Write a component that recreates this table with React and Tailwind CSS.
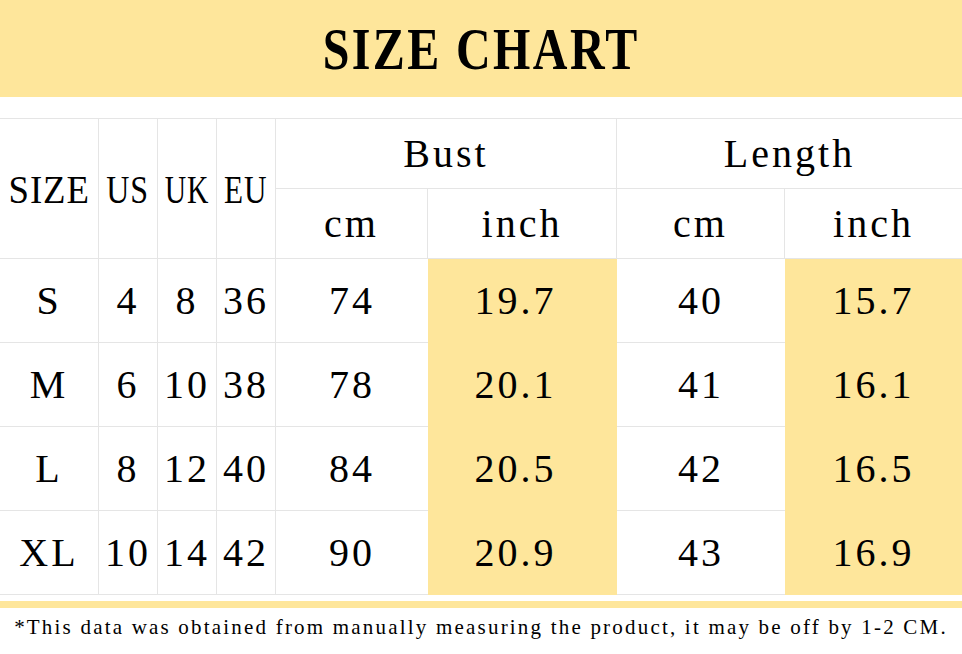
import React from 'react';

const rows = [
  { size: 'S', us: '4', uk: '8', eu: '36', bustCm: '74', bustIn: '19.7', lenCm: '40', lenIn: '15.7' },
  { size: 'M', us: '6', uk: '10', eu: '38', bustCm: '78', bustIn: '20.1', lenCm: '41', lenIn: '16.1' },
  { size: 'L', us: '8', uk: '12', eu: '40', bustCm: '84', bustIn: '20.5', lenCm: '42', lenIn: '16.5' },
  { size: 'XL', us: '10', uk: '14', eu: '42', bustCm: '90', bustIn: '20.9', lenCm: '43', lenIn: '16.9' },
];

const cell = 'flex items-center justify-center border-b border-r border-[#e5e5e5]';

const App = () => {
  return (
    <div className="w-[962px] h-[654px] bg-white text-black font-['Liberation_Serif',serif] overflow-hidden">
      <div className="h-[97px] bg-[#fee69b] flex items-center justify-center">
        <h1 className="text-[60px] leading-none font-bold scale-x-[0.8] tracking-[3px]">SIZE CHART</h1>
      </div>

      <div className="mt-[21px] grid grid-cols-[99px_59px_59px_59px_152px_189px_168px_177px] grid-rows-[70px_70px_84px_84px_84px_84px] border-t border-[#e5e5e5] text-[40px] leading-none tracking-[3px]">
        <div className={`${cell} row-span-2 tracking-[1px] pt-[3px]`}>
          <span className="inline-block scale-x-[0.92]">SIZE</span>
        </div>
        <div className={`${cell} row-span-2 tracking-[1px] pt-[3px]`}>
          <span className="inline-block scale-x-[0.8]">US</span>
        </div>
        <div className={`${cell} row-span-2 tracking-[1px] pt-[3px]`}>
          <span className="inline-block scale-x-[0.74]">UK</span>
        </div>
        <div className={`${cell} row-span-2 tracking-[1px] pt-[3px]`}>
          <span className="inline-block scale-x-[0.78]">EU</span>
        </div>
        <div className={`${cell} col-span-2`}>Bust</div>
        <div className={`${cell} col-span-2 border-r-0`}>Length</div>
        <div className={cell}>cm</div>
        <div className={cell}>inch</div>
        <div className={cell}>cm</div>
        <div className={`${cell} border-r-0`}>inch</div>

        {rows.map((r, i) => (
          <React.Fragment key={r.size}>
            <div className={`${cell} col-start-1`} style={{ gridRowStart: i + 3 }}>{r.size}</div>
            <div className={cell} style={{ gridRowStart: i + 3 }}>{r.us}</div>
            <div className={cell} style={{ gridRowStart: i + 3 }}>{r.uk}</div>
            <div className={cell} style={{ gridRowStart: i + 3 }}>{r.eu}</div>
            <div className={`${cell} border-r-0`} style={{ gridRowStart: i + 3 }}>{r.bustCm}</div>
            <div className={`${cell} col-start-7 border-r-0`} style={{ gridRowStart: i + 3 }}>{r.lenCm}</div>
          </React.Fragment>
        ))}

        <div className="col-start-6 row-start-3 row-span-4 bg-[#fee69b] grid grid-rows-4">
          {rows.map((r) => (
            <div key={r.size} className="flex items-center justify-center pr-[14px]">{r.bustIn}</div>
          ))}
        </div>
        <div className="col-start-8 row-start-3 row-span-4 bg-[#fee69b] grid grid-rows-4">
          {rows.map((r) => (
            <div key={r.size} className="flex items-center justify-center">{r.lenIn}</div>
          ))}
        </div>
      </div>

      <div className="mt-[6px] h-[7px] bg-[#fee69b]" />

      <div className="h-[38px] flex items-center justify-center text-[21px] tracking-[2.2px] leading-none">
        *This data was obtained from manually measuring the product, it may be off by 1-2 CM.
      </div>
    </div>
  );
};

export default App;
